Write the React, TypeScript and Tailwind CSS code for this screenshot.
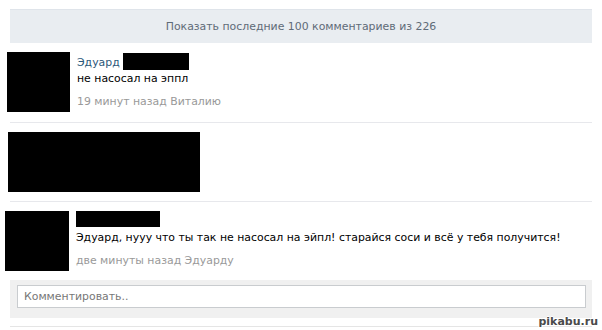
const App = () => {
  return (
    <div className="relative w-[602px] h-[330px] overflow-hidden bg-white text-[10.9px] font-['DejaVu_Sans',Tahoma,sans-serif]">
      {/* показать ещё */}
      <div className="pt-[9px] pl-[10px]">
        <div className="w-[582px] h-[34px] bg-[#e9edf1] border-t border-[#dfe4ea] text-center leading-[33px] text-[#5f6b78]">
          Показать последние 100 комментариев из 226
        </div>
      </div>

      {/* comment 1 */}
      <div className="flex mt-[9px]">
        <div className="ml-[7px] w-[63px] h-[60px] bg-black shrink-0" />
        <div className="ml-[7px] pt-[3px]">
          <div className="flex items-start leading-[16px]">
            <span className="text-[#2b587a]">Эдуард</span>
            <div className="ml-[3px] -mt-[2px] w-[66px] h-[17px] bg-black" />
          </div>
          <div className="leading-[16px] text-black">не насосал на эппл</div>
          <div className="mt-[7px] leading-[16px] text-[#999]">19 минут назад Виталию</div>
        </div>
      </div>

      <div className="ml-[10px] mt-[10px] w-[582px] h-px bg-[#e7e8ec]" />

      {/* comment 2 (скрыт) */}
      <div className="ml-[8px] mt-[9px] w-[192px] h-[60px] bg-black" />

      <div className="ml-[10px] mt-[9px] w-[582px] h-px bg-[#e7e8ec]" />

      {/* comment 3 */}
      <div className="flex mt-[9px]">
        <div className="ml-[5px] w-[64px] h-[60px] bg-black shrink-0" />
        <div className="ml-[7px]">
          <div className="w-[84px] h-[16px] bg-black" />
          <div className="mt-[3px] leading-[16px] text-black">
            Эдуард, нууу что ты так не насосал на эйпл! старайся соси и всё у тебя получится!
          </div>
          <div className="mt-[7px] leading-[16px] text-[#999]">две минуты назад Эдуарду</div>
        </div>
      </div>

      {/* форма */}
      <div className="ml-[10px] mt-[9px] w-[582px] h-[38px] bg-[#f0f0f0] pt-[5px] pl-[7px]">
        <div className="w-[569px] h-[23px] bg-white border border-[#c9cccf] pl-[6px] leading-[21px] text-[#777]">
          Комментировать..
        </div>
      </div>

      <div className="ml-[10px] mt-[8px] w-[582px] h-px bg-[#e5e5e5]" />

      <div className="absolute right-[4px] bottom-[3px] text-[11px] font-bold leading-none text-[#4a4a4a] [text-shadow:1px_0_0_#fff,-1px_0_0_#fff,0_1px_0_#fff,0_-1px_0_#fff]">
        pikabu.ru
      </div>
    </div>
  );
};

export default App;
